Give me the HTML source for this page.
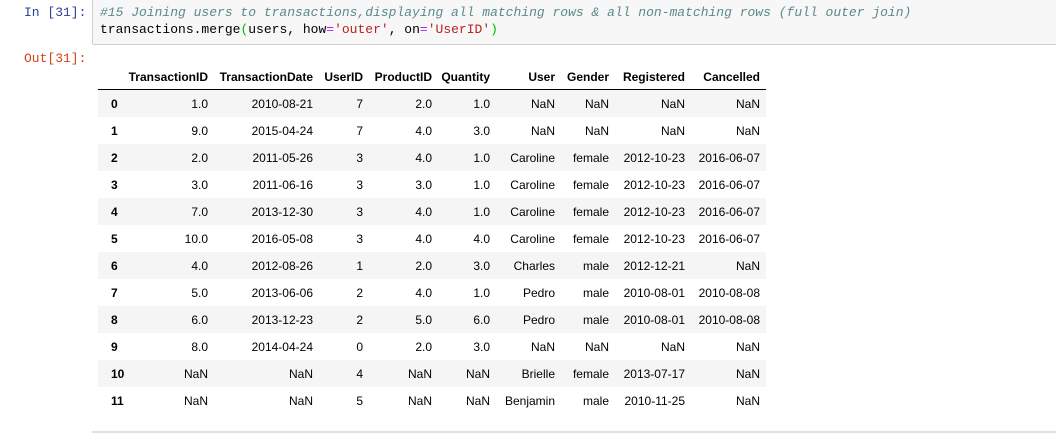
<!DOCTYPE html>
<html><head><style>
body{margin:0;width:1056px;height:434px;background:#fff;position:relative;overflow:hidden;font-family:"Liberation Sans",Arial,sans-serif;font-size:12px;color:#000}
.mono{font-family:"Liberation Mono",monospace;font-size:13px;position:absolute;white-space:pre}
.box{position:absolute;left:92px;top:-1px;width:970px;height:44px;background:#f7f7f7;border:1px solid #cfcfcf;border-radius:2px}
.r{position:absolute;left:98px;width:668px;height:27px}
.c{position:absolute;white-space:nowrap;line-height:14px}
.h{font-weight:bold}
</style></head><body>
<div class="mono" style="left:24px;top:5px;color:#303f9f">In [31]:</div>
<div class="box"></div>
<div class="mono" style="left:100px;top:5px;color:#5a8a8a;font-style:italic">#15 Joining users to transactions,displaying all matching rows &amp; all non-matching rows (full outer join)</div>
<div class="mono" style="left:100px;top:22px">transactions.merge<span style="color:#0b0">(</span>users, how<span style="color:#a2f">=</span><span style="color:#ba2121">'outer'</span>, on<span style="color:#a2f">=</span><span style="color:#ba2121">'UserID'</span><span style="color:#0b0">)</span></div>
<div class="mono" style="left:24px;top:51px;color:#d84315">Out[31]:</div>
<div style="position:absolute;left:98px;top:89px;width:668px;height:1px;background:#000"></div>
<div style="position:absolute;left:92px;top:431px;width:964px;height:2px;background:#e0e0e0"></div>
<div id="t"></div>
<script>
var R=[208,313,363,432,490,555,609,685,760];
var H=["TransactionID","TransactionDate","UserID","ProductID","Quantity","User","Gender","Registered","Cancelled"];
var D=[
["1.0","2010-08-21","7","2.0","1.0","NaN","NaN","NaN","NaN"],
["9.0","2015-04-24","7","4.0","3.0","NaN","NaN","NaN","NaN"],
["2.0","2011-05-26","3","4.0","1.0","Caroline","female","2012-10-23","2016-06-07"],
["3.0","2011-06-16","3","3.0","1.0","Caroline","female","2012-10-23","2016-06-07"],
["7.0","2013-12-30","3","4.0","1.0","Caroline","female","2012-10-23","2016-06-07"],
["10.0","2016-05-08","3","4.0","4.0","Caroline","female","2012-10-23","2016-06-07"],
["4.0","2012-08-26","1","2.0","3.0","Charles","male","2012-12-21","NaN"],
["5.0","2013-06-06","2","4.0","1.0","Pedro","male","2010-08-01","2010-08-08"],
["6.0","2013-12-23","2","5.0","6.0","Pedro","male","2010-08-01","2010-08-08"],
["8.0","2014-04-24","0","2.0","3.0","NaN","NaN","NaN","NaN"],
["NaN","NaN","4","NaN","NaN","Brielle","female","2013-07-17","NaN"],
["NaN","NaN","5","NaN","NaN","Benjamin","male","2010-11-25","NaN"]];
var s="";
for(var j=0;j<9;j++)s+='<div class="c h" style="right:'+(1056-R[j])+'px;top:70px">'+H[j]+'</div>';
for(var i=0;i<12;i++){var y=90+i*27;
if(i%2==0)s+='<div class="r" style="top:'+y+'px;background:#f5f5f5"></div>';
s+='<div class="c h" style="left:111px;top:'+(y+7)+'px">'+i+'</div>';
for(var j=0;j<9;j++)s+='<div class="c" style="right:'+(1056-R[j])+'px;top:'+(y+7)+'px">'+D[i][j]+'</div>';}
document.getElementById("t").innerHTML=s;
</script>
</body></html>
